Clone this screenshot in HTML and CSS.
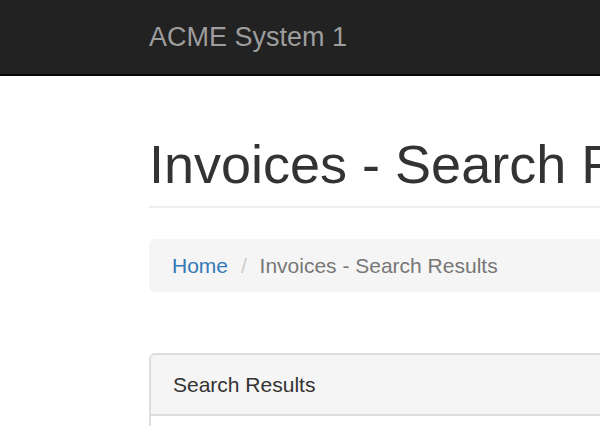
FILE: index.html
```html
<!DOCTYPE html>
<html lang="en">
<head>
<meta charset="utf-8">
<title>Invoices - Search Results</title>
<link rel="stylesheet" href="styles.css">
</head>
<body>
<header class="navbar">
  <div class="container">
    <a class="brand" href="#">ACME System 1</a>
  </div>
</header>
<main class="container">
  <div class="page-header">
    <h1>Invoices - Search Results</h1>
  </div>
  <ol class="breadcrumb">
    <li><a href="#">Home</a></li>
    <li class="active">Invoices - Search Results</li>
  </ol>
  <section class="panel">
    <div class="panel-heading">Search Results</div>
    <div class="panel-body"></div>
  </section>
</main>
</body>
</html>
```
FILE: styles.css
```css
html, body {
  margin: 0;
  padding: 0;
  overflow: hidden;
  background: #fff;
}
body {
  font-family: "Liberation Sans", Arial, sans-serif;
  font-size: 21px;
  color: #333;
}
.container {
  margin-left: 149px;
  width: 1200px;
}
.navbar {
  background: #222;
  height: 74px;
  border-bottom: 2px solid #080808;
}
.brand {
  display: inline-block;
  font-size: 27px;
  line-height: 74px;
  color: #9d9d9d;
  text-decoration: none;
}
.page-header {
  margin-top: 59px;
  padding-bottom: 12px;
  border-bottom: 2px solid #eee;
}
.page-header h1 {
  margin: 0;
  font-size: 54px;
  font-weight: 500;
  line-height: 1.1;
  color: #333;
  white-space: nowrap;
}
.breadcrumb {
  list-style: none;
  margin: 31px 0 0;
  padding: 12px 23px 12px;
  line-height: 29px;
  background: #f5f5f5;
  border-radius: 6px;
}
.breadcrumb li {
  display: inline-block;
}
.breadcrumb li + li::before {
  content: "/\00a0";
  padding: 0 7px;
  color: #ccc;
}
.breadcrumb a {
  color: #337ab7;
  text-decoration: none;
}
.breadcrumb .active {
  color: #777;
}
.panel {
  margin-top: 61px;
  border: 2px solid #ddd;
  border-radius: 6px;
  background: #fff;
}
.panel-heading {
  background: #f5f5f5;
  padding: 15px 22px 14px;
  line-height: 30px;
  color: #333;
  border-bottom: 2px solid #ddd;
  border-radius: 4px 4px 0 0;
}
.panel-body {
  min-height: 120px;
}
```
